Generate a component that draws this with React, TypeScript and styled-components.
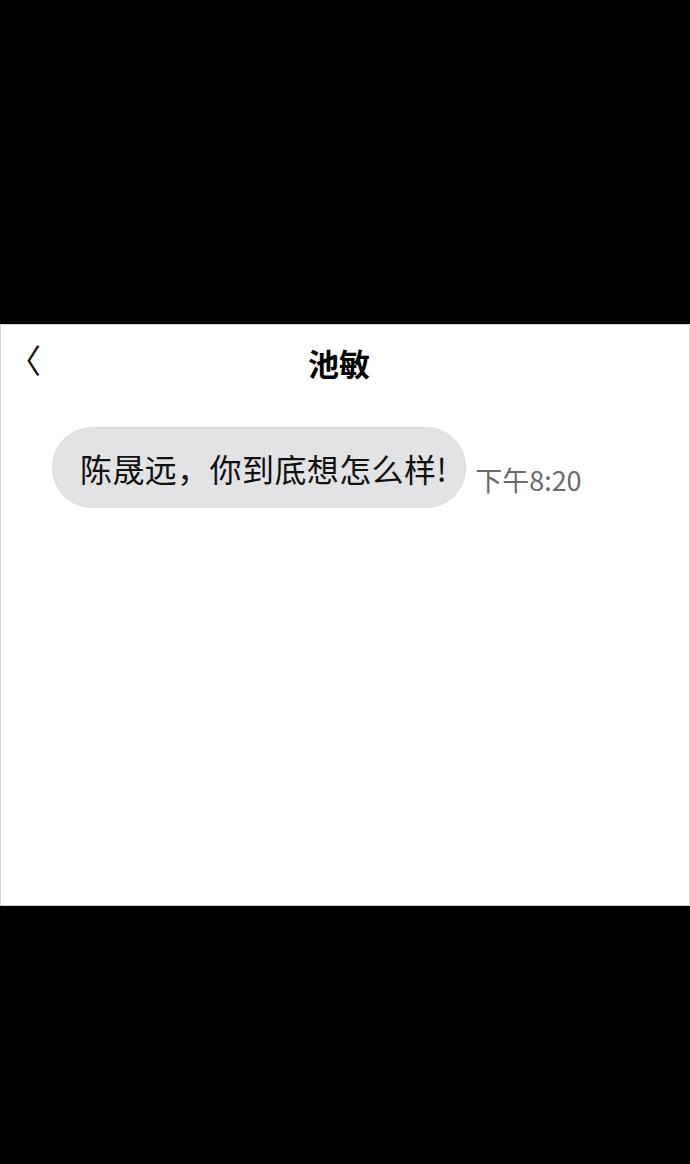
import React from "react";
import styled, { createGlobalStyle } from "styled-components";

const GlobalStyle = createGlobalStyle`
  html, body {
    margin: 0;
    padding: 0;
    background: #000;
  }
  body {
    font-family: "Noto Sans CJK SC", "Noto Sans", sans-serif;
  }
`;

const Page = styled.div`
  width: 690px;
  height: 1164px;
  padding-top: 324px;
  box-sizing: border-box;
  background: #000;
`;

const Screen = styled.div`
  box-sizing: border-box;
  height: 582px;
  background: #fff;
  border: 1px solid #d4d4d4;
  display: flex;
  flex-direction: column;
`;

const Header = styled.div`
  position: relative;
  height: 76px;
  display: flex;
  align-items: center;
  justify-content: center;
  padding-right: 12px;
`;

const Back = styled.span`
  position: absolute;
  left: 7px;
  top: 12px;
  font-size: 33px;
  line-height: 44px;
  color: #111;
`;

const Title = styled.h1`
  margin: 0;
  font-size: 31px;
  font-weight: 700;
  color: #000;
  line-height: 74px;
`;

const Thread = styled.div`
  padding: 26px 0 0 51px;
`;

const Row = styled.div`
  display: flex;
  align-items: flex-end;
  gap: 9px;
`;

const Bubble = styled.div`
  box-sizing: border-box;
  height: 81px;
  padding: 0 18px 0 27px;
  display: flex;
  align-items: center;
  background: #e3e3e5;
  border: 1px solid #dcdcde;
  border-radius: 40px;
  font-size: 32px;
  color: #111;
  letter-spacing: 0.4px;
`;

const Time = styled.span`
  font-size: 27px;
  color: #6a6a6a;
  margin-bottom: 9px;
`;

export default function App() {
  return (
    <Page>
      <GlobalStyle />
      <Screen>
        <Header>
          <Back>〈</Back>
          <Title>池敏</Title>
        </Header>
        <Thread>
          <Row>
            <Bubble>陈晟远，你到底想怎么样!</Bubble>
            <Time>下午8:20</Time>
          </Row>
        </Thread>
      </Screen>
    </Page>
  );
}
